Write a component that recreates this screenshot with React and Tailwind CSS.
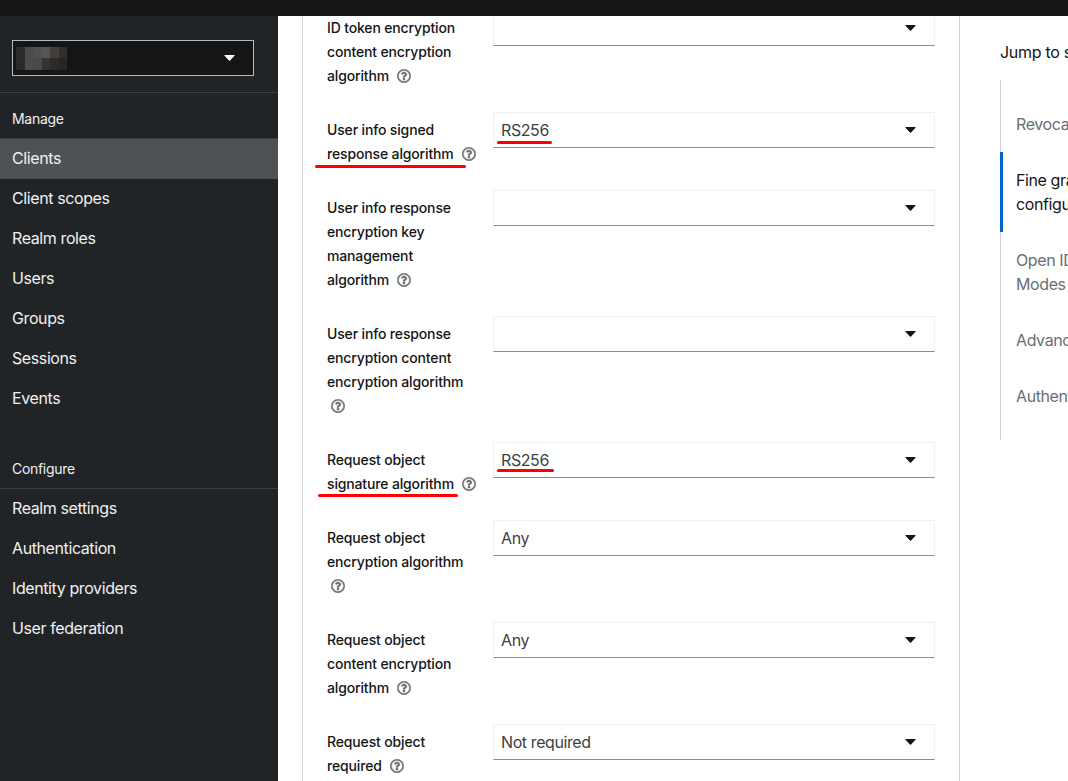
import React from 'react';
import { FaRegQuestionCircle } from 'react-icons/fa';

const manageItems = ['Clients', 'Client scopes', 'Realm roles', 'Users', 'Groups', 'Sessions', 'Events'];
const configureItems = ['Realm settings', 'Authentication', 'Identity providers', 'User federation'];

const blurCells = [
  '#2c2c2c', '#4a4a4a', '#505050', '#555757', '#453f3c', '#2e2e2e',
  '#2a2a2a', '#4c4c4c', '#484848', '#333333', '#2d2a2a', '#262626',
];

const rows = [
  { lines: ['ID token encryption', 'content encryption', 'algorithm'], value: '' },
  { lines: ['User info signed', 'response algorithm'], value: 'RS256', mark: 'first' },
  { lines: ['User info response', 'encryption key', 'management', 'algorithm'], value: '' },
  { lines: ['User info response', 'encryption content', 'encryption algorithm', ''], value: '' },
  { lines: ['Request object', 'signature algorithm'], value: 'RS256', mark: 'second' },
  { lines: ['Request object', 'encryption algorithm', ''], value: 'Any' },
  { lines: ['Request object', 'content encryption', 'algorithm'], value: 'Any' },
  { lines: ['Request object', 'required'], value: 'Not required' },
];

const jumpLinks = [
  { lines: ['Revocation'] },
  { lines: ['Fine grain OpenID Connect', 'configuration'], active: true },
  { lines: ['Open ID Connect Compatibility', 'Modes'] },
  { lines: ['Advanced settings'] },
  { lines: ['Authentication flow overrides'] },
];

function Caret({ className = '' }) {
  return (
    <svg viewBox="0 0 12 7" className={`w-[11px] h-[6px] ${className}`} fill="currentColor">
      <path d="M0.6 0h10.8c.5 0 .8.6.4 1L6.4 6.6c-.2.2-.6.2-.8 0L.2 1c-.4-.4-.1-1 .4-1z" />
    </svg>
  );
}

function NavItem({ label, active }) {
  return (
    <div className={`h-10 px-3 pb-[2px] flex items-center text-base tracking-[-0.4px] text-[#f0f0f0] ${active ? 'bg-[#4f5255]' : ''}`}>
      {label}
    </div>
  );
}

function Sidebar() {
  return (
    <aside className="w-[278px] shrink-0 bg-[#212427] text-white">
      <div className="h-[77px] pl-3 pr-6 pt-6 border-b border-[#3c3f42]">
        <div className="h-9 bg-[#151515] border border-[#b8bbbe] flex items-center justify-between pl-[3px] pr-[18px]">
          <div className="grid grid-cols-6 w-[51px] h-[23px]">
            {blurCells.map((c, i) => (
              <div key={i} style={{ backgroundColor: c }} />
            ))}
          </div>
          <Caret className="text-white" />
        </div>
      </div>
      <div className="h-[46px] px-3 flex items-end pb-[9px] text-sm tracking-[-0.3px] text-[#f0f0f0] border-b border-[#3c3f42]">Manage</div>
      {manageItems.map((item) => (
        <NavItem key={item} label={item} active={item === 'Clients'} />
      ))}
      <div className="h-[70px] px-3 flex items-end pb-[9px] text-sm tracking-[-0.3px] text-[#f0f0f0] border-b border-[#3c3f42]">Configure</div>
      {configureItems.map((item) => (
        <NavItem key={item} label={item} />
      ))}
    </aside>
  );
}

function FormRow({ lines, value, mark }) {
  return (
    <div className="relative flex">
      <div className="w-[166px] shrink-0 pt-[6px] text-sm leading-6 tracking-[-0.15px] font-medium text-[#151515]">
        {lines.map((line, i) => (
          <div key={i} className="whitespace-nowrap flex items-center h-6">
            {line}
            {i === lines.length - 1 && (
              <FaRegQuestionCircle className={`w-[14px] h-[14px] text-[#6a6e73] stroke-[16] ${line ? 'ml-2' : 'ml-1'}`} />
            )}
          </div>
        ))}
      </div>
      <div className="w-[442px] h-9 shrink-0 border border-[#f0f0f0] border-b-[#8a8d90] flex items-center justify-between pl-[7px] pr-[18px] text-base tracking-[-0.4px] text-[#3c3f42]">
        <span className="pb-[1px]">{value}</span>
        <Caret className="text-[#151515]" />
      </div>
      {mark === 'first' && (
        <>
          <div className="absolute left-[-12px] top-[53px] w-[151px] h-[3px] bg-[#ff0000] rounded-full" />
          <div className="absolute left-[170px] top-[29px] w-[55px] h-[3px] bg-[#ff0000] rounded-full" />
        </>
      )}
      {mark === 'second' && (
        <>
          <div className="absolute left-[-9px] top-[52px] w-[140px] h-[3px] bg-[#ff0000] rounded-full" />
          <div className="absolute left-[170px] top-[27px] w-[57px] h-[3px] bg-[#ff0000] rounded-full" />
        </>
      )}
    </div>
  );
}

function JumpLinks() {
  return (
    <div className="w-[260px] shrink-0 pl-10 pt-[26px]">
      <div className="h-5 leading-5 text-base tracking-[-0.3px] text-[#151515] whitespace-nowrap">Jump to section</div>
      <div className="mt-[18px] h-[360px] border-l border-[#d2d2d2] pt-4 flex flex-col">
        {jumpLinks.map((link) => (
          <div
            key={link.lines[0]}
            className={`relative pl-[15px] py-4 text-base leading-6 tracking-[-0.4px] whitespace-nowrap ${link.active ? 'text-[#151515]' : 'text-[#6a6e73]'}`}
          >
            {link.active && <div className="absolute left-[-1px] top-0 bottom-0 w-[3px] bg-[#06c]" />}
            {link.lines.map((l) => (
              <div key={l}>{l}</div>
            ))}
          </div>
        ))}
      </div>
    </div>
  );
}

export default function App() {
  return (
    <div className="h-[781px] w-[1068px] overflow-hidden flex flex-col bg-white font-['Inter',sans-serif]">
      <div className="h-4 shrink-0 bg-[#151515]" />
      <div className="flex flex-1 min-h-0">
        <Sidebar />
        <main className="flex flex-1 min-w-0 overflow-hidden pl-6">
          <div className="w-[658px] shrink-0 border-x border-[#d2d2d2] pl-6 -mt-[6px] flex flex-col gap-6">
            {rows.map((row) => (
              <FormRow key={row.lines.join(' ')} {...row} />
            ))}
          </div>
          <JumpLinks />
        </main>
      </div>
    </div>
  );
}
